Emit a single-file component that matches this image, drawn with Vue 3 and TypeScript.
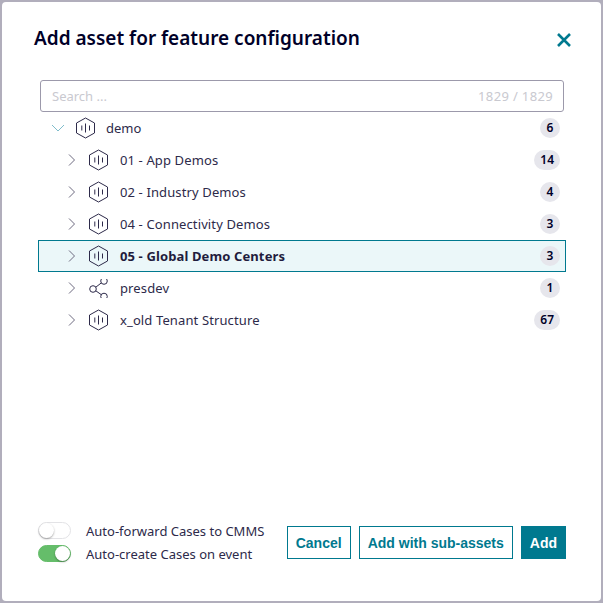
<script setup lang="ts">
import { ref } from "vue";

type Row = { name: string; count: number; icon: "asset" | "share"; selected?: boolean };

const rows: Row[] = [
  { name: "01 - App Demos", count: 14, icon: "asset" },
  { name: "02 - Industry Demos", count: 4, icon: "asset" },
  { name: "04 - Connectivity Demos", count: 3, icon: "asset" },
  { name: "05 - Global Demo Centers", count: 3, icon: "asset", selected: true },
  { name: "presdev", count: 1, icon: "share" },
  { name: "x_old Tenant Structure", count: 67, icon: "asset" },
];

const autoForward = ref(false);
const autoCreate = ref(true);
</script>

<template>
  <div class="backdrop">
    <div class="modal">
      <header class="head">
        <h1>Add asset for feature configuration</h1>
        <svg class="close" width="16" height="16" viewBox="0 0 16 16">
          <path d="M2 2 L14 14 M14 2 L2 14" fill="none" stroke="#00798f" stroke-width="2.6" />
        </svg>
      </header>

      <div class="search">
        <span>Search ...</span>
        <span class="hits">1829 / 1829</span>
      </div>

      <div class="tree">
        <div class="row root">
          <svg class="chev" width="14" height="14" viewBox="0 0 14 14">
            <path d="M1 4 L7 10 L13 4" fill="none" stroke="#7fbccb" stroke-width="1" />
          </svg>
          <svg class="icon" width="20" height="22" viewBox="0 0 20 22">
            <path d="M9.5 1 L18.5 6 V16 L9.5 21 L0.5 16 V6 Z" fill="none" stroke="#2d2a4a" stroke-width="1" stroke-linejoin="round" />
            <path d="M5.8 8.5 V13.5 M9.5 6.5 V15.5 M13.5 8.5 V13.5" fill="none" stroke="#2d2a4a" stroke-width="1" />
          </svg>
          <span class="name">demo</span>
          <span class="badge">6</span>
        </div>
        <div v-for="row in rows" :key="row.name" class="row child" :class="{ selected: row.selected }">
          <svg class="chev side" width="10" height="14" viewBox="0 0 10 14">
            <path d="M2 1.5 L7.5 7 L2 12.5" fill="none" stroke="#6d6a80" stroke-width="1" />
          </svg>
          <svg v-if="row.icon === 'asset'" class="icon" width="20" height="22" viewBox="0 0 20 22">
            <path d="M9.5 1 L18.5 6 V16 L9.5 21 L0.5 16 V6 Z" fill="none" stroke="#2d2a4a" stroke-width="1" stroke-linejoin="round" />
            <path d="M5.8 8.5 V13.5 M9.5 6.5 V15.5 M13.5 8.5 V13.5" fill="none" stroke="#2d2a4a" stroke-width="1" />
          </svg>
          <svg v-else class="icon" width="20" height="22" viewBox="0 0 20 22">
            <clipPath id="share-clip"><rect x="0" y="2" width="20" height="19" /></clipPath>
            <g clip-path="url(#share-clip)" fill="none" stroke="#2d2a4a" stroke-width="1">
              <circle cx="4" cy="12" r="3.3" />
              <circle cx="15" cy="4" r="3.3" />
              <circle cx="15" cy="19.5" r="3.3" />
              <path d="M6.8 10.2 L12.2 6 M6.8 13.8 L12.2 17.6" />
            </g>
          </svg>
          <span class="name">{{ row.name }}</span>
          <span class="badge">{{ row.count }}</span>
        </div>
      </div>

      <footer class="foot">
        <div class="toggles">
          <div class="toggle-row">
            <span class="toggle" :class="{ on: autoForward }"><i></i></span>
            <span>Auto-forward Cases to CMMS</span>
          </div>
          <div class="toggle-row">
            <span class="toggle" :class="{ on: autoCreate }"><i></i></span>
            <span>Auto-create Cases on event</span>
          </div>
        </div>
        <div class="buttons">
          <button class="btn">Cancel</button>
          <button class="btn">Add with sub-assets</button>
          <button class="btn primary">Add</button>
        </div>
      </footer>
    </div>
  </div>
</template>

<style>
html,
body {
  margin: 0;
  background: #b1aebc;
}
</style>

<style scoped>
.backdrop {
  width: 603px;
  height: 603px;
  box-sizing: border-box;
  padding: 2px;
  background: #b1aebc;
  font-family: "Noto Sans", "Open Sans", sans-serif;
  color: #2d2a4a;
}

.modal {
  height: 599px;
  box-sizing: border-box;
  background: #fff;
  border-radius: 4px;
  display: flex;
  flex-direction: column;
  padding: 0 37px 0 38px;
}

.head {
  height: 78px;
  display: flex;
  align-items: flex-start;
  justify-content: space-between;
  margin-left: -6px;
  margin-right: -8px;
  flex-shrink: 0;
}

h1 {
  margin: 20px 0 0;
  font-size: 19px;
  line-height: 32px;
  font-weight: 600;
  color: #000028;
}

.close {
  margin-top: 30px;
}

.search {
  height: 32px;
  box-sizing: border-box;
  border: 1px solid #9c99ab;
  border-radius: 3px;
  padding: 0 10px 0 11px;
  display: flex;
  align-items: center;
  justify-content: space-between;
  font-size: 13px;
  color: #c9c9d0;
  flex-shrink: 0;
}

.hits {
  letter-spacing: 0.35px;
}

.tree {
  margin: 0 -2px;
  flex: 1;
}

.row {
  height: 32px;
  box-sizing: border-box;
  display: flex;
  align-items: center;
  font-size: 13px;
  padding-right: 6px;
}

.root {
  padding-left: 13px;
}

.child {
  padding-left: 29px;
}

.child .name {
  letter-spacing: 0.12px;
}

.selected {
  border: 1px solid #00798f;
  background: #ebf7f9;
  padding-left: 28px;
  padding-right: 5px;
  font-weight: 700;
  color: #1f1c3d;
}

.chev {
  flex-shrink: 0;
}

.icon {
  margin-left: 11px;
  margin-right: 10px;
  flex-shrink: 0;
}

.side + .icon {
  margin-left: 12px;
  margin-right: 11px;
}

.name {
  flex: 1;
}

.badge {
  min-width: 20px;
  height: 20px;
  box-sizing: border-box;
  padding: 0 6px;
  border-radius: 10px;
  background: #e6e6ec;
  color: #000028;
  font-size: 12px;
  font-weight: 600;
  line-height: 20px;
  text-align: center;
}

.foot {
  height: 86px;
  flex-shrink: 0;
  display: flex;
  justify-content: space-between;
  align-items: flex-start;
  margin: 0 -2px;
}

.toggles {
  display: flex;
  flex-direction: column;
  gap: 6px;
  padding-top: 7px;
  font-size: 13px;
}

.toggle-row {
  display: flex;
  align-items: center;
  gap: 15px;
  height: 17px;
}

.toggle {
  display: block;
  width: 33px;
  height: 17px;
  box-sizing: border-box;
  border: 1px solid #e3e3e6;
  border-radius: 9px;
  background: #fff;
  position: relative;
}

.toggle i {
  position: absolute;
  top: 0;
  left: 0;
  width: 15px;
  height: 15px;
  border-radius: 50%;
  background: #fff;
  box-shadow: 0 1px 2px rgba(0, 0, 0, 0.35);
}

.toggle.on {
  background: #65bd6a;
  border-color: #65bd6a;
}

.toggle.on i {
  left: 16px;
}

.buttons {
  display: flex;
  gap: 8px;
  margin-top: 11px;
}

.btn {
  height: 33px;
  padding: 0 8px;
  border: 1px solid #00798f;
  background: #fff;
  color: #00798f;
  font-family: "Liberation Sans", Arial, sans-serif;
  font-size: 14px;
  font-weight: 700;
}

.primary {
  background: #00798f;
  color: #fff;
}
</style>
